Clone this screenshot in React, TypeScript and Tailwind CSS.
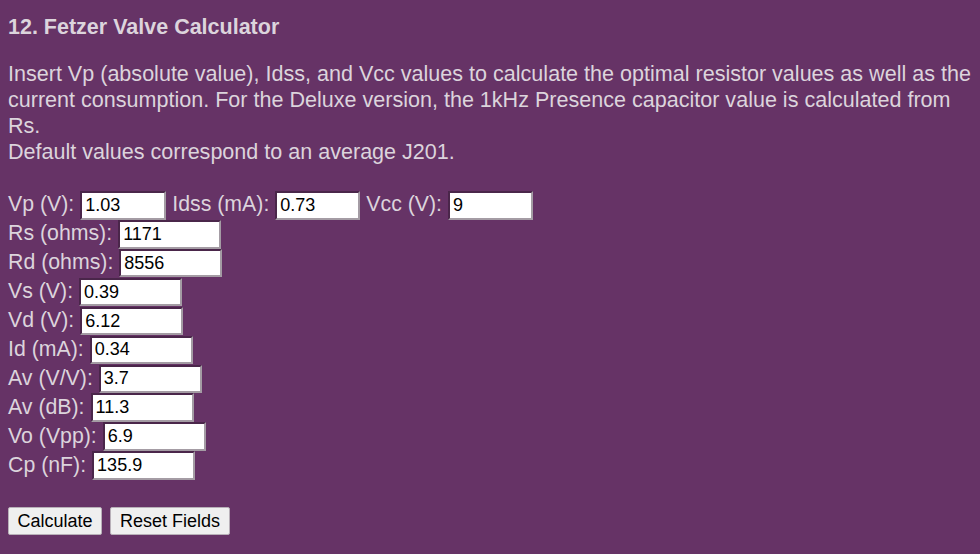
import React from 'react';

const rows: { label: string; value: string; w: string }[][] = [
    [
        { label: 'Vp (V):', value: '1.03', w: 'w-[86px]' },
        { label: 'Idss (mA):', value: '0.73', w: 'w-[85px]' },
        { label: 'Vcc (V):', value: '9', w: 'w-[85px]' },
    ],
    [{ label: 'Rs (ohms):', value: '1171', w: 'w-[103px]' }],
    [{ label: 'Rd (ohms):', value: '8556', w: 'w-[103px]' }],
    [{ label: 'Vs (V):', value: '0.39', w: 'w-[103px]' }],
    [{ label: 'Vd (V):', value: '6.12', w: 'w-[103px]' }],
    [{ label: 'Id (mA):', value: '0.34', w: 'w-[103px]' }],
    [{ label: 'Av (V/V):', value: '3.7', w: 'w-[103px]' }],
    [{ label: 'Av (dB):', value: '11.3', w: 'w-[103px]' }],
    [{ label: 'Vo (Vpp):', value: '6.9', w: 'w-[103px]' }],
    [{ label: 'Cp (nF):', value: '135.9', w: 'w-[103px]' }],
];

export default function App() {
    return (
        <div className="min-h-[554px] bg-[#663366] px-2 pt-[14px] text-[#dcd4dc] font-['Liberation_Sans',Arial,sans-serif]">
            <h3 className="text-[21.5px] font-bold leading-[26px]">12. Fetzer Valve Calculator</h3>

            <p className="mt-[21px] text-[21.55px] leading-[26px]">
                Insert Vp (absolute value), Idss, and Vcc values to calculate the optimal resistor values as well as the current consumption. For the Deluxe version, the 1kHz Presence capacitor value is calculated from Rs.
                <br />
                Default values correspond to an average J201.
            </p>

            {/* Campos */}
            <div className="mt-[26px] flex flex-col">
                {rows.map((row, i) => (
                    <div key={i} className="flex h-[28.9px] items-center text-[21.3px]">
                        {row.map((f, j) => (
                            <React.Fragment key={j}>
                                <span className={j > 0 ? 'ml-[6px]' : ''}>{f.label}</span>
                                <input
                                    type="text"
                                    defaultValue={f.value}
                                    className={`${f.w} ml-[6px] h-[28.4px] bg-white px-[3px] text-[18px] text-black border-[2.5px] border-t-[#4a264a] border-l-[#4a264a] border-b-[#a49ca4] border-r-[#a49ca4] outline-none`}
                                />
                            </React.Fragment>
                        ))}
                    </div>
                ))}
            </div>

            <div className="mt-[27px] flex gap-2">
                <button className="h-[28px] w-[94px] bg-[#efefef] border border-[#b8b0b8] rounded-[2px] text-[18px] text-black">
                    Calculate
                </button>
                <button className="h-[28px] w-[120px] bg-[#efefef] border border-[#b8b0b8] rounded-[2px] text-[18px] text-black">
                    Reset Fields
                </button>
            </div>
        </div>
    );
}
